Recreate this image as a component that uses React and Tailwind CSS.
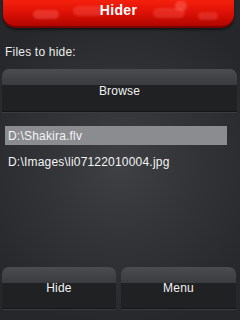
import React, { useState } from 'react';

const font = { fontFamily: '"Liberation Sans", Arial, sans-serif' };

function PhoneButton({ label, className = '' }) {
    return (
        <button
            type="button"
            className={`relative flex flex-col rounded-t-[7px] overflow-hidden border-b border-[#141516] shadow-[0_1px_0_#3a3c40] ${className}`}
        >
            <div className="h-[16px] w-full bg-gradient-to-b from-[#4a4c50] to-[#393b3f]" />
            <div className="flex-1 w-full bg-[#202123]" />
            <span className="absolute inset-0 flex items-center justify-center text-[12px] tracking-[0.2px] text-[#f2f2f2] pt-[1px]">
                {label}
            </span>
        </button>
    );
}

export default function App() {
    const [files] = useState(['D:\\Shakira.flv', 'D:\\Images\\li07122010004.jpg']);
    const [selected, setSelected] = useState(0);

    return (
        <div
            className="w-[240px] h-[320px] flex flex-col overflow-hidden bg-[radial-gradient(circle_at_50%_52%,#3e4044_0%,#323438_35%,#25272a_80%)]"
            style={font}
        >
            {/* title bar */}
            <div className="ml-[3px] w-[231px] h-[28px] relative rounded-b-[13px] overflow-hidden bg-gradient-to-b from-[#f5200c] via-[#dc1006] to-[#b00600] border-b-2 border-[#7a0300] shadow-[0_2px_2px_#151617]">
                <div className="absolute left-[30px] top-[10px] w-[26px] h-[9px] rounded-full bg-[#ff6a60] opacity-40 blur-[1px]" />
                <div className="absolute left-[70px] top-[6px] w-[30px] h-[10px] rounded-full bg-[#ff6a60] opacity-30 blur-[1px]" />
                <div className="absolute left-[150px] top-[8px] w-[32px] h-[10px] rounded-full bg-[#ff6a60] opacity-30 blur-[1px]" />
                <div className="absolute left-[172px] top-[1px] w-[12px] h-[10px] rounded-full bg-[#ff7a70] opacity-40 blur-[1px]" />
                <div className="absolute left-[195px] top-[12px] w-[20px] h-[8px] rounded-full bg-[#ff6a60] opacity-30 blur-[1px]" />
                <div className="absolute inset-0 flex items-center justify-center pb-[6px]">
                    <span className="text-[14px] font-bold text-white tracking-[0.3px]">Hider</span>
                </div>
            </div>

            <div className="mt-[17px] pl-[5px] text-[12px] leading-[14px] tracking-[0.2px] text-[#ececec]">
                Files to hide:
            </div>

            <PhoneButton label="Browse" className="mt-[10px] ml-[2px] w-[235px] h-[43px]" />

            <div className="mt-[14px] flex flex-col gap-[7px]">
                {files.map((f, i) => (
                    <div
                        key={f}
                        onClick={() => setSelected(i)}
                        className={`ml-[5px] w-[222px] h-[19px] flex items-center pl-[3px] text-[12px] tracking-[0.2px] text-[#f4f4f4] ${
                            selected === i ? 'bg-[#8b8c8f]' : ''
                        }`}
                    >
                        {f}
                    </div>
                ))}
            </div>

            <div className="flex-1" />

            <div className="flex gap-[5px] pl-[2px] pb-[11px]">
                <PhoneButton label="Hide" className="w-[114px] h-[42px]" />
                <PhoneButton label="Menu" className="w-[115px] h-[42px]" />
            </div>
        </div>
    );
}
